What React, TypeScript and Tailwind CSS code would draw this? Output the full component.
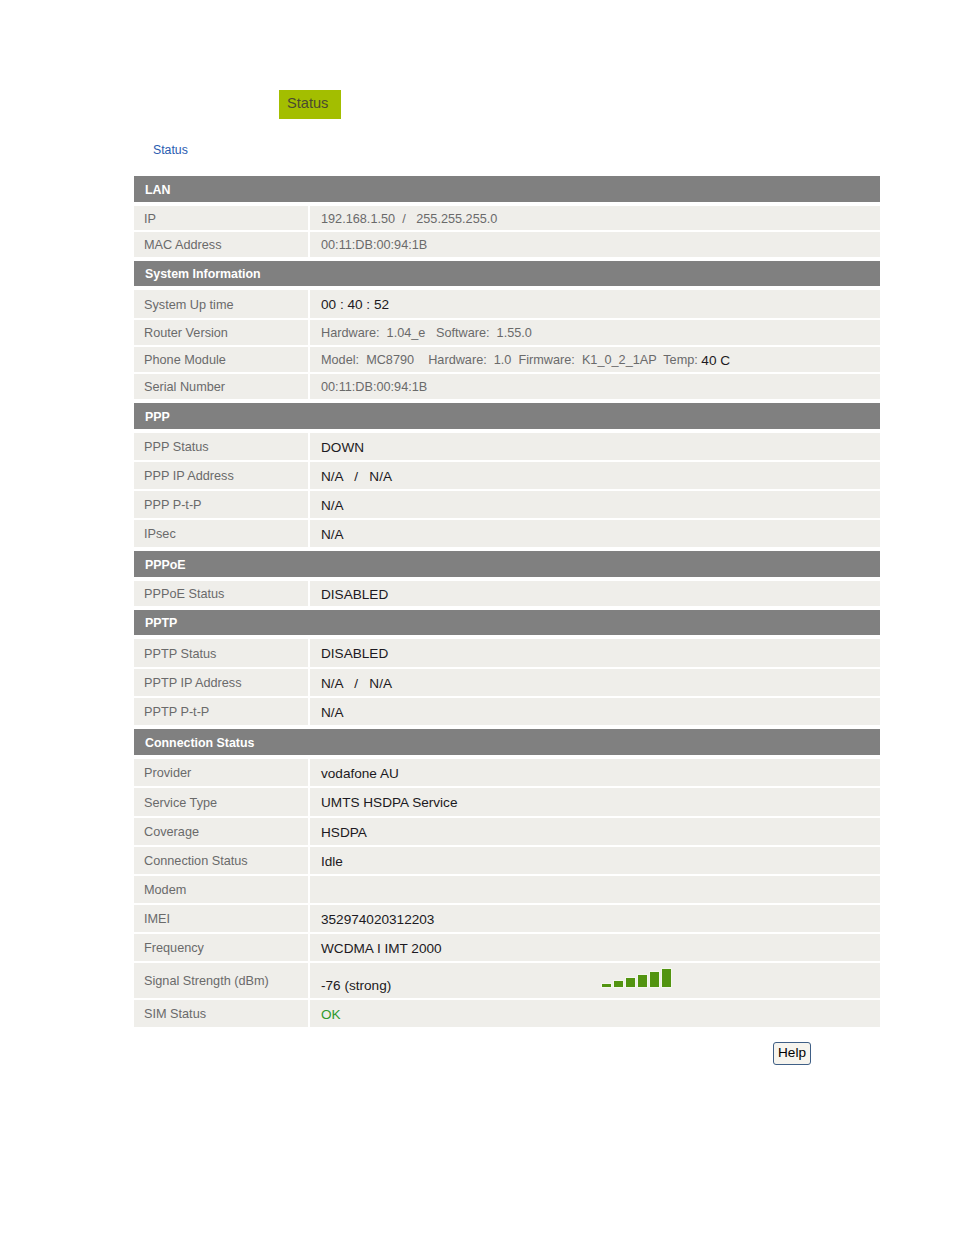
import { ReactNode } from "react";

const FONT = { fontFamily: '"Liberation Sans", Arial, sans-serif' };

function Header({ title, h, first }: { title: string; h: number; first?: boolean }) {
  return (
    <div
      className={`flex items-center bg-[#808080] pl-[11px] pt-[2px] text-[12.4px] font-bold text-white ${first ? "" : "mt-[2px]"} mb-[2px]`}
      style={{ height: h }}
    >
      {title}
    </div>
  );
}

function Row({ label, h, children, end }: { label: string; h: number; children?: ReactNode; end?: boolean }) {
  return (
    <div className="flex gap-[2px]" style={{ height: h }}>
      <div className="flex w-[174px] shrink-0 items-center bg-[#efeeea] pl-[10px] pt-[3px] text-[12.7px] text-[#6a6a6a]">
        {label}
      </div>
      <div
        className={`flex flex-1 bg-[#efeeea] pl-[11px] whitespace-pre ${end ? "items-end pb-[1px]" : "items-center pt-[3px]"}`}
      >
        {children}
      </div>
    </div>
  );
}

// small grey value text
function Sm({ children }: { children: ReactNode }) {
  return <span className="text-[12.7px] text-[#6a6a6a]">{children}</span>;
}

// larger dark value text
function Lg({ children, green }: { children: ReactNode; green?: boolean }) {
  return <span className={`text-[13.6px] ${green ? "text-[#2e9a2e]" : "text-[#1c1a22]"}`}>{children}</span>;
}

function SignalBars() {
  const heights = [3, 6, 9, 12, 15, 18];
  return (
    <div className="mb-[9px] flex items-end gap-[1px]">
      {heights.map((h, i) => (
        <div key={i} className="w-[11px] border border-[#f4f7ee] bg-[#529410]" style={{ height: h + 2 }} />
      ))}
    </div>
  );
}

export default function App() {
  return (
    <div className="min-h-[1235px] w-[954px] bg-white" style={FONT}>
      {/* Tab */}
      <div className="pt-[90px] pl-[279px]">
        <div className="flex h-[29px] w-[62px] items-center bg-[#a3be00] pl-[8px] pb-[2px] text-[14.6px] text-[#4a4a30]">
          Status
        </div>
      </div>

      {/* Breadcrumb */}
      <div className="mt-[24px] pl-[153px] text-[12.3px] leading-[14px] text-[#2a5cb0]">Status</div>

      {/* Status table */}
      <div className="mt-[19px] ml-[134px] flex w-[746px] flex-col gap-[2px]">
        <Header title="LAN" h={26} first />
        <Row label="IP" h={24}>
          <Sm>192.168.1.50  /   255.255.255.0</Sm>
        </Row>
        <Row label="MAC Address" h={25}>
          <Sm>00:11:DB:00:94:1B</Sm>
        </Row>

        <Header title="System Information" h={25} />
        <Row label="System Up time" h={28}>
          <Lg>00 : 40 : 52</Lg>
        </Row>
        <Row label="Router Version" h={25}>
          <Sm>Hardware:  1.04_e   Software:  1.55.0</Sm>
        </Row>
        <Row label="Phone Module" h={25}>
          <Sm>Model:  MC8790    Hardware:  1.0  Firmware:  K1_0_2_1AP  Temp: </Sm>
          <Lg>40 C</Lg>
        </Row>
        <Row label="Serial Number" h={25}>
          <Sm>00:11:DB:00:94:1B</Sm>
        </Row>

        <Header title="PPP" h={26} />
        <Row label="PPP Status" h={27}>
          <Lg>DOWN</Lg>
        </Row>
        <Row label="PPP IP Address" h={27}>
          <Lg>N/A   /   N/A</Lg>
        </Row>
        <Row label="PPP P-t-P" h={27}>
          <Lg>N/A</Lg>
        </Row>
        <Row label="IPsec" h={27}>
          <Lg>N/A</Lg>
        </Row>

        <Header title="PPPoE" h={26} />
        <Row label="PPPoE Status" h={25}>
          <Lg>DISABLED</Lg>
        </Row>

        <Header title="PPTP" h={25} />
        <Row label="PPTP Status" h={28}>
          <Lg>DISABLED</Lg>
        </Row>
        <Row label="PPTP IP Address" h={27}>
          <Lg>N/A   /   N/A</Lg>
        </Row>
        <Row label="PPTP P-t-P" h={27}>
          <Lg>N/A</Lg>
        </Row>

        <Header title="Connection Status" h={26} />
        <Row label="Provider" h={27}>
          <Lg>vodafone AU</Lg>
        </Row>
        <Row label="Service Type" h={28}>
          <Lg>UMTS HSDPA Service</Lg>
        </Row>
        <Row label="Coverage" h={27}>
          <Lg>HSDPA</Lg>
        </Row>
        <Row label="Connection Status" h={27}>
          <Lg>Idle</Lg>
        </Row>
        <Row label="Modem" h={27} />
        <Row label="IMEI" h={27}>
          <Lg>352974020312203</Lg>
        </Row>
        <Row label="Frequency" h={27}>
          <Lg>WCDMA I IMT 2000</Lg>
        </Row>
        <Row label="Signal Strength (dBm)" h={35} end>
          <span className="w-[280px] shrink-0">
            <Lg>-76 (strong)</Lg>
          </span>
          <SignalBars />
        </Row>
        <Row label="SIM Status" h={27}>
          <Lg green>OK</Lg>
        </Row>
      </div>

      {/* Help */}
      <div className="mt-[15px] flex w-[811px] justify-end">
        <button className="flex h-[23px] w-[38px] items-center justify-center rounded-[3px] border border-[#3f5f86] bg-[#f6f4ee] text-[13.6px] text-black">
          Help
        </button>
      </div>
    </div>
  );
}
